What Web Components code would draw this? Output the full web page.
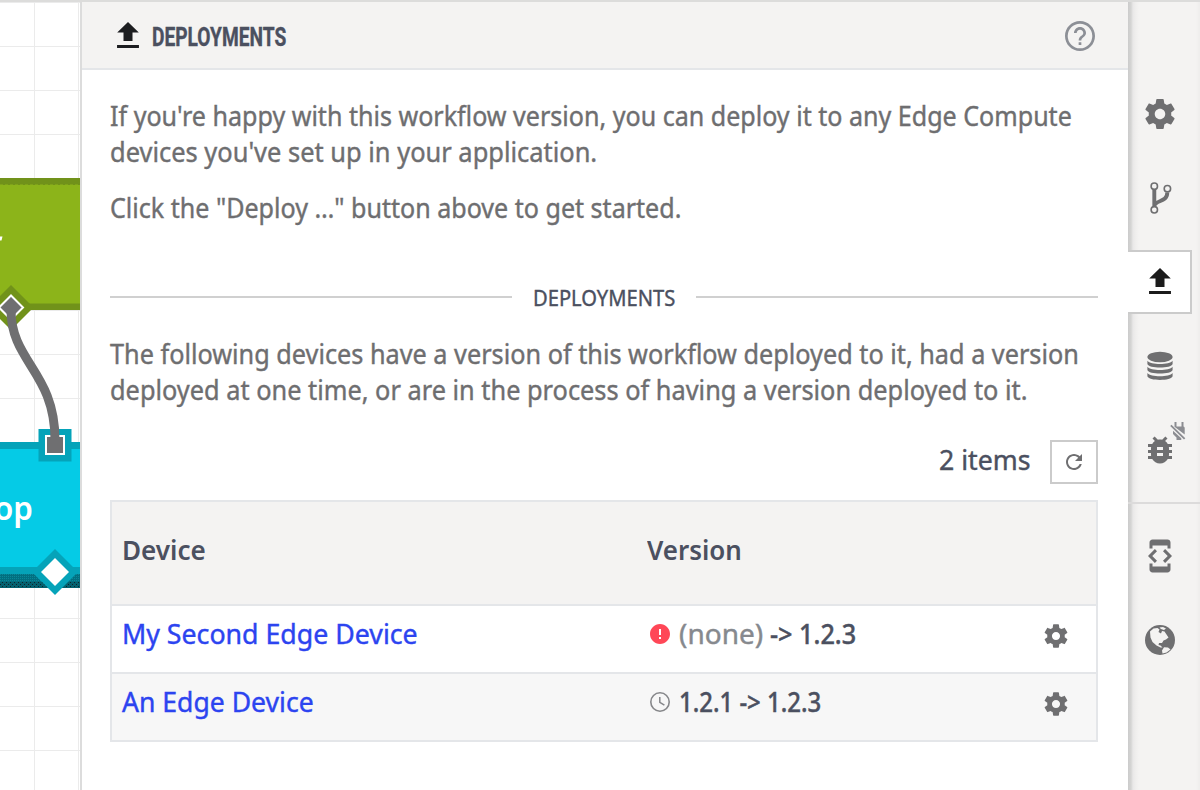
<!DOCTYPE html>
<html lang="en">
<head>
<meta charset="utf-8">
<title>Deployments</title>
<style>
html, body { margin: 0; height: 100%; overflow: hidden; }
body { font: 27px/36px "Noto Sans", "Open Sans", sans-serif; color: #6e6e70; background: #fff; }
</style>
</head>
<body>
<app-shell>
  <flow-canvas slot="canvas"></flow-canvas>
  <side-panel slot="panel">
    <fit-line slot="title" w="134">DEPLOYMENTS</fit-line>
    <text-block>
      <fit-line w="962">If you're happy with this workflow version, you can deploy it to any Edge Compute</fit-line>
      <fit-line w="487">devices you've set up in your application.</fit-line>
    </text-block>
    <text-block>
      <fit-line w="571">Click the "Deploy …" button above to get started.</fit-line>
    </text-block>
    <section-rule><fit-line w="142">DEPLOYMENTS</fit-line></section-rule>
    <text-block>
      <fit-line w="969">The following devices have a version of this workflow deployed to it, had a version</fit-line>
      <fit-line w="917">deployed at one time, or are in the process of having a version deployed to it.</fit-line>
    </text-block>
    <list-toolbar><fit-line w="92">2 items</fit-line></list-toolbar>
    <device-table>
      <fit-line slot="head-device" w="84">Device</fit-line>
      <fit-line slot="head-version" w="95">Version</fit-line>
      <device-row>
        <fit-line slot="device" w="296">My Second Edge Device</fit-line>
        <ui-icon slot="status" name="alert" size="24" style="color:#ff4757"></ui-icon>
        <fit-line slot="version" w="84" style="color:#86898e;font-weight:400">(none)</fit-line>
        <fit-line slot="version" w="86">-&gt; 1.2.3</fit-line>
      </device-row>
      <device-row alt>
        <fit-line slot="device" w="192">An Edge Device</fit-line>
        <ui-icon slot="status" name="clock" size="24" style="color:#86878a"></ui-icon>
        <fit-line slot="version" w="142">1.2.1 -&gt; 1.2.3</fit-line>
      </device-row>
    </device-table>
  </side-panel>
  <icon-rail slot="rail">
    <rail-item><ui-icon name="gear" size="36"></ui-icon></rail-item>
    <rail-item><ui-icon name="branch" size="36"></ui-icon></rail-item>
    <rail-item active><ui-icon name="upload" size="36"></ui-icon></rail-item>
    <rail-item><ui-icon name="database" size="36"></ui-icon></rail-item>
    <rail-item><ui-icon name="bug" size="36"></ui-icon><ui-icon slot="badge" name="unplugged" size="20"></ui-icon></rail-item>
    <rail-divider></rail-divider>
    <rail-item><ui-icon name="devmode" size="36"></ui-icon></rail-item>
    <rail-item><ui-icon name="globe" size="30"></ui-icon></rail-item>
  </icon-rail>
</app-shell>
<script>
const define = (name, html, setup) => customElements.define(name, class extends HTMLElement {
  constructor() {
    super();
    const t = document.createElement('template');
    t.innerHTML = html;
    this.attachShadow({ mode: 'open' }).appendChild(t.content.cloneNode(true));
  }
  connectedCallback() { if (setup) setup(this); }
});

const ICONS = {
  upload: ['0 0 24 24', '<path d="M9 15.300h6V9.700h4.200L12 2.700 4.800 9.700H9zM4.700 18h14.600v2H4.700z"/>'],
  gear: ['0 0 24 24', '<path d="M19.43 12.98c.04-.32.07-.64.07-.98s-.03-.66-.07-.98l2.11-1.65c.19-.15.24-.42.12-.64l-2-3.46c-.12-.22-.39-.3-.61-.22l-2.49 1c-.52-.4-1.08-.73-1.69-.98l-.38-2.65C14.46 2.18 14.25 2 14 2h-4c-.25 0-.46.18-.49.42l-.38 2.65c-.61.25-1.17.59-1.69.98l-2.49-1c-.23-.09-.49 0-.61.22l-2 3.46c-.13.22-.07.49.12.64l2.11 1.65c-.04.32-.07.65-.07.98s.03.66.07.98l-2.11 1.65c-.19.15-.24.42-.12.64l2 3.46c.12.22.39.3.61.22l2.49-1c.52.4 1.08.73 1.69.98l.38 2.65c.03.24.24.42.49.42h4c.25 0 .46-.18.49-.42l.38-2.65c.61-.25 1.17-.59 1.69-.98l2.49 1c.23.09.49 0 .61-.22l2-3.46c.12-.22.07-.49-.12-.64l-2.11-1.65zM12 15.5c-1.93 0-3.5-1.57-3.5-3.5s1.57-3.5 3.5-3.5 3.5 1.57 3.5 3.5-1.57 3.5-3.5 3.5z"/>'],
  branch: ['0 0 36 36', '<g fill="none" stroke="currentColor"><path d="M12.300 9v18M12.300 26.500c0-7 13-3.500 13-14" stroke-width="3.900"/><g stroke-width="1.600" fill="#f4f3f2"><circle cx="12.300" cy="6.200" r="3.200"/><circle cx="12.300" cy="29.800" r="3.200"/><circle cx="25.400" cy="8.700" r="3.200"/></g></g>'],
  database: ['0 0 36 36', '<ellipse cx="18" cy="9" rx="12.600" ry="5.200"/><path d="M5.400 12.700c3 4.300 22.200 4.300 25.200 0v3.300c-1 4.800-24.200 4.800-25.200 0zM5.400 18.700c3 4.300 22.200 4.300 25.200 0v3.300c-1 4.800-24.200 4.800-25.200 0zM5.400 24.900c3 4.300 22.200 4.300 25.200 0v3.300c-1 4.900-24.200 4.900-25.200 0z"/>'],
  bug: ['0 0 24 24', '<path d="M20 8h-2.810c-.45-.78-1.070-1.450-1.820-1.960L17 4.410 15.590 3l-2.170 2.170C12.960 5.060 12.490 5 12 5c-.49 0-.96.06-1.410.17L8.410 3 7 4.410l1.620 1.630C7.880 6.550 7.260 7.220 6.810 8H4v2h2.090c-.05.33-.09.66-.09 1v1H4v2h2v1c0 .34.04.67.09 1H4v2h2.810c1.040 1.790 2.970 3 5.190 3s4.150-1.210 5.190-3H20v-2h-2.090c.05-.33.09-.66.09-1v-1h2v-2h-2v-1c0-.34-.04-.67-.09-1H20V8zm-6 8h-4v-2h4v2zm0-4h-4v-2h4v2z"/>'],
  unplugged: ['0 0 20 20', '<path d="M7.500 1h2v4.500h5V1h2v4.500q1.200.2 1.200 1.500V13.600L7.500 5.800zM3.200 5L4.500 3.700 18.300 17.200 17 18.500zM6 9.700L14.300 17.300V19H9.500v-2.500L6 13z"/>'],
  devmode: ['0 0 24 24', '<path d="M7 5h10v2h2V3c0-1.100-.9-1.990-2-1.990L7 1c-1.100 0-2 .9-2 2v4h2V5zm8.410 11.590L20 12l-4.590-4.590L14 8.830 17.170 12 14 15.170l1.410 1.420zM10 15.170L6.830 12 10 8.830 8.590 7.410 4 12l4.590 4.590L10 15.170zM17 19H7v-2H5v4c0 1.100.9 2 2 2h10c1.100 0 2-.9 2-2v-4h-2v2z"/>'],
  globe: ['0 0 30 30', '<circle cx="15" cy="15" r="15"/><path fill="#f4f3f2" d="M5 6.500L8.500 3.500 12.500 3 14.500 4.500 13.500 7 16 8.500 17 6 19.500 6.500 21.500 9.500 23.500 12.500 21 14.500 18.500 15.500 17 18 14 18 13.500 20 15.500 20.500 17.500 22.500 15.500 22.500 11.500 20.500 7.500 17 5.500 12.500zM14.500 2.500L18 2 21 3.500 19 5 16 4zM19 22.200L23 22.500 25.500 24.500 21.500 27.500 17.500 28.500 17 25.500z"/>'],
  help: ['0 0 24 24', '<path d="M11.100 18h1.800v-1.900h-1.800V18zm.9-16C6.480 2 2 6.480 2 12s4.480 10 10 10 10-4.480 10-10S17.520 2 12 2zm0 18.200a8.200 8.200 0 1 1 0-16.400 8.200 8.200 0 0 1 0 16.400zM12 6c-2.210 0-4 1.790-4 4h1.800c0-1.250 1-2.200 2.200-2.200s2.200.95 2.200 2.200c0 2-3.100 1.750-3.100 5h1.800c0-2.250 3.100-2.500 3.100-5 0-2.210-1.790-4-4-4z"/>'],
  refresh: ['0 0 24 24', '<path d="M17.650 6.350C16.200 4.900 14.210 4 12 4c-4.420 0-7.990 3.580-7.990 8s3.570 8 7.990 8c3.730 0 6.840-2.550 7.730-6h-2.080c-.82 2.330-3.040 4-5.650 4-3.310 0-6-2.690-6-6s2.690-6 6-6c1.660 0 3.140.69 4.220 1.780L13 11h7V4l-2.350 2.350z"/>'],
  alert: ['0 0 24 24', '<path d="M12 2C6.480 2 2 6.480 2 12s4.480 10 10 10 10-4.480 10-10S17.520 2 12 2zm1 15h-2v-2h2v2zm0-4h-2V7h2v6z"/>'],
  clock: ['0 0 24 24', '<g fill="none" stroke="currentColor"><circle cx="12" cy="12" r="9.200" stroke-width="1.600"/><path d="M11.800 7v5.300l4.600 2.900" stroke-width="1.500"/></g>']
};
define('ui-icon', `<style>:host{display:block;flex:none}svg{display:block;fill:currentColor;width:100%;height:100%}</style><svg></svg>`, el => {
  const [box, body] = ICONS[el.getAttribute('name')];
  const svg = el.shadowRoot.querySelector('svg');
  el.style.width = el.style.height = el.getAttribute('size') + 'px';
  svg.setAttribute('viewBox', box);
  svg.innerHTML = body;
});

define('app-shell', `<style>
:host{display:grid;grid-template-columns:80px 1048px 72px;box-sizing:border-box;height:790px;width:1200px;border-top:2px solid #dcdcdb;overflow:hidden}
</style><slot name="canvas"></slot><slot name="panel"></slot><slot name="rail"></slot>`);

define('flow-canvas', `<style>
:host{display:block;overflow:hidden}svg{display:block}
text{font:600 33px "Noto Sans",sans-serif;fill:#fff}
</style>
<svg width="80" height="788" viewBox="0 2 80 788">
  <defs>
    <pattern id="dots" width="2" height="2" patternUnits="userSpaceOnUse"><rect width="2" height="2" fill="#036f80"/><rect width="1" height="1" fill="#08899a"/></pattern>
    <pattern id="dark" width="4" height="4" patternUnits="userSpaceOnUse"><rect width="4" height="4" fill="#04616f"/><rect width="1" height="1" fill="#10232b"/><rect x="2" y="2" width="1" height="1" fill="#10232b"/></pattern>
  </defs>
  <path d="M34.500 2V790M78.500 2V790M0 2.500H80M0 46.500H80M0 90.500H80M0 134.500H80M0 178.500H80M0 310.500H80M0 354.500H80M0 398.500H80M0 442.500H80M0 618.500H80M0 662.500H80M0 706.500H80M0 750.500H80" stroke="#ebebeb" fill="none"/>
  <rect y="178" width="80" height="132" fill="#71921a"/><rect y="185" width="80" height="118.500" fill="#8cb41a"/>
  <path d="M0 184.500H80M0 303.500H80" stroke="#7fa31a" stroke-dasharray="3 2"/>
  <path d="M0 236.500h2.500l-1 4H0z" fill="#fff"/>
  <path d="M11 285L33.500 307.500 11 330-11.500 307.500z" fill="#71921a"/>
  <path d="M11 295.500L23 307.500 11 319.500-1 307.500z" fill="#6f6f71" stroke="#fff" stroke-width="2"/>
  <rect y="442" width="80" height="132" fill="#05a3b9"/><rect y="449" width="80" height="118" fill="#05cbe6"/>
  <rect y="574" width="80" height="8" fill="url(#dots)"/><rect y="582" width="80" height="6" fill="url(#dark)"/>
  <rect x="38.500" y="429" width="33" height="32.500" fill="#05a3b9"/>
  <rect x="46" y="436" width="18" height="18" fill="#6f6f71" stroke="#fff" stroke-width="2"/>
  <path d="M11 310C11 362 55 372 55 440" stroke="#6f6f71" stroke-width="9" fill="none"/>
  <path d="M55 549L78 572 55 595 32 572z" fill="#05a3b9"/><path d="M55 558L69 572 55 586 41 572z" fill="#fff"/>
  <text x="-6" y="520" textLength="39" lengthAdjust="spacingAndGlyphs">op</text>
</svg>`);

define('side-panel', `<style>
:host{display:flex;flex-direction:column;box-sizing:border-box;border-left:2px solid #dcdcdc;background:#fff;min-width:0}
header{display:flex;align-items:center;box-sizing:border-box;height:68px;padding:2px 30px 0 28px;background:#f4f3f2;border-bottom:2px solid #e4e6e9}
.t{margin-left:6px;flex:1;color:#4b5060;font:700 26px/36px Roboto,sans-serif;padding-top:1px;-webkit-text-stroke:.4px currentColor}
ui-icon{color:#8c8f96}ui-icon.u{color:#1c1d20}
main{display:flex;flex-direction:column;gap:20px;padding:28px 30px 0 28px}
</style>
<header><ui-icon class="u" name="upload" size="36"></ui-icon><div class="t"><slot name="title"></slot></div><ui-icon name="help" size="36"></ui-icon></header>
<main><slot></slot></main>`);

define('text-block', `<style>:host{display:flex;flex-direction:column;-webkit-text-stroke:.4px currentColor}</style><slot></slot>`);

/* A single line of text condensed or widened to the width given in its "w" attribute. */
define('fit-line', `<style>
:host{display:block;flex:none;white-space:nowrap}
span{display:inline-block;transform-origin:0 0;vertical-align:top}
</style><span><slot></slot></span>`, el => {
  el.style.width = el.getAttribute('w') + 'px';
  requestAnimationFrame(() => fit(el));
});
function fit(el) {
  const s = el.shadowRoot.querySelector('span');
  s.style.transform = `scaleX(${+el.getAttribute('w') / s.offsetWidth})`;
}

define('section-rule', `<style>
:host{display:flex;align-items:center;gap:21px;height:36px;margin:33px 0 1px;color:#4b5060;font-size:22px;-webkit-text-stroke:.4px currentColor}
i{flex:1;height:2px;background:#d0d0d0;margin-bottom:1px}
</style><i></i><slot></slot><i></i>`);

define('list-toolbar', `<style>
:host{display:flex;justify-content:flex-end;gap:19px;margin:12px 0 -4px;color:#4b5060;line-height:40px;-webkit-text-stroke:.4px currentColor}
button{display:grid;place-items:center;box-sizing:border-box;width:48px;height:44px;padding:0;border:2px solid #cbcbcb;background:#fff;color:#6f6f71}
</style><slot></slot><button aria-label="Refresh"><ui-icon name="refresh" size="24"></ui-icon></button>`);

define('device-table', `<style>
:host{display:block;border:2px solid #e4e6e9}
.h{display:grid;grid-template-columns:525px 1fr;height:102px;padding-left:10px;background:#f4f3f2;color:#4b5060;font-weight:600;line-height:95px}
</style><div class="h"><slot name="head-device"></slot><slot name="head-version"></slot></div><slot></slot>`);

define('device-row', `<style>
:host{display:grid;grid-template-columns:525px 1fr 28px;align-items:center;box-sizing:border-box;height:68px;padding:0 26px 0 10px;border-top:2px solid #e4e6e9;background:#fff;color:#2c44f0}
:host([alt]){background:#f7f7f7}
.v{display:flex;align-items:center;color:#4b5060}
.s{margin:0 7px 10px 1px}
slot[name=version]{display:flex;gap:7px}
.d,.f{padding-bottom:11px;-webkit-text-stroke:.4px currentColor}
.f{font-weight:500}
ui-icon{color:#6f6f71;margin-bottom:6px}
</style><div class="d"><slot name="device"></slot></div><div class="v"><div class="s"><slot name="status"></slot></div><div class="f"><slot name="version"></slot></div></div><ui-icon name="gear" size="28"></ui-icon>`);

define('icon-rail', `<style>
:host{display:flex;flex-direction:column;gap:20px;box-sizing:border-box;padding-top:80px;color:#6f6f71;background:linear-gradient(90deg,#cbcbcb 0,#d5d5d4 3px,#e9e8e8 5px,#f0efee 8px,#f4f3f2 11px,#f4f3f2 68px,#eeedec 72px)}
</style><slot></slot>`);

define('rail-item', `<style>
:host{position:relative;display:grid;place-items:center;box-sizing:border-box;width:64px;height:64px}
:host([active]){background:#fff;border:2px solid #cbcbcb;border-left:0;color:#1b1b1b;padding-left:2px}
.b{position:absolute;left:39px;top:3px;color:#8c8d92}
</style><slot></slot><div class="b"><slot name="badge"></slot></div>`);

define('rail-divider', `<style>:host{display:block;height:2px;margin:0;background:#dcdbdb}</style>`);
</script>
</body>
</html>
